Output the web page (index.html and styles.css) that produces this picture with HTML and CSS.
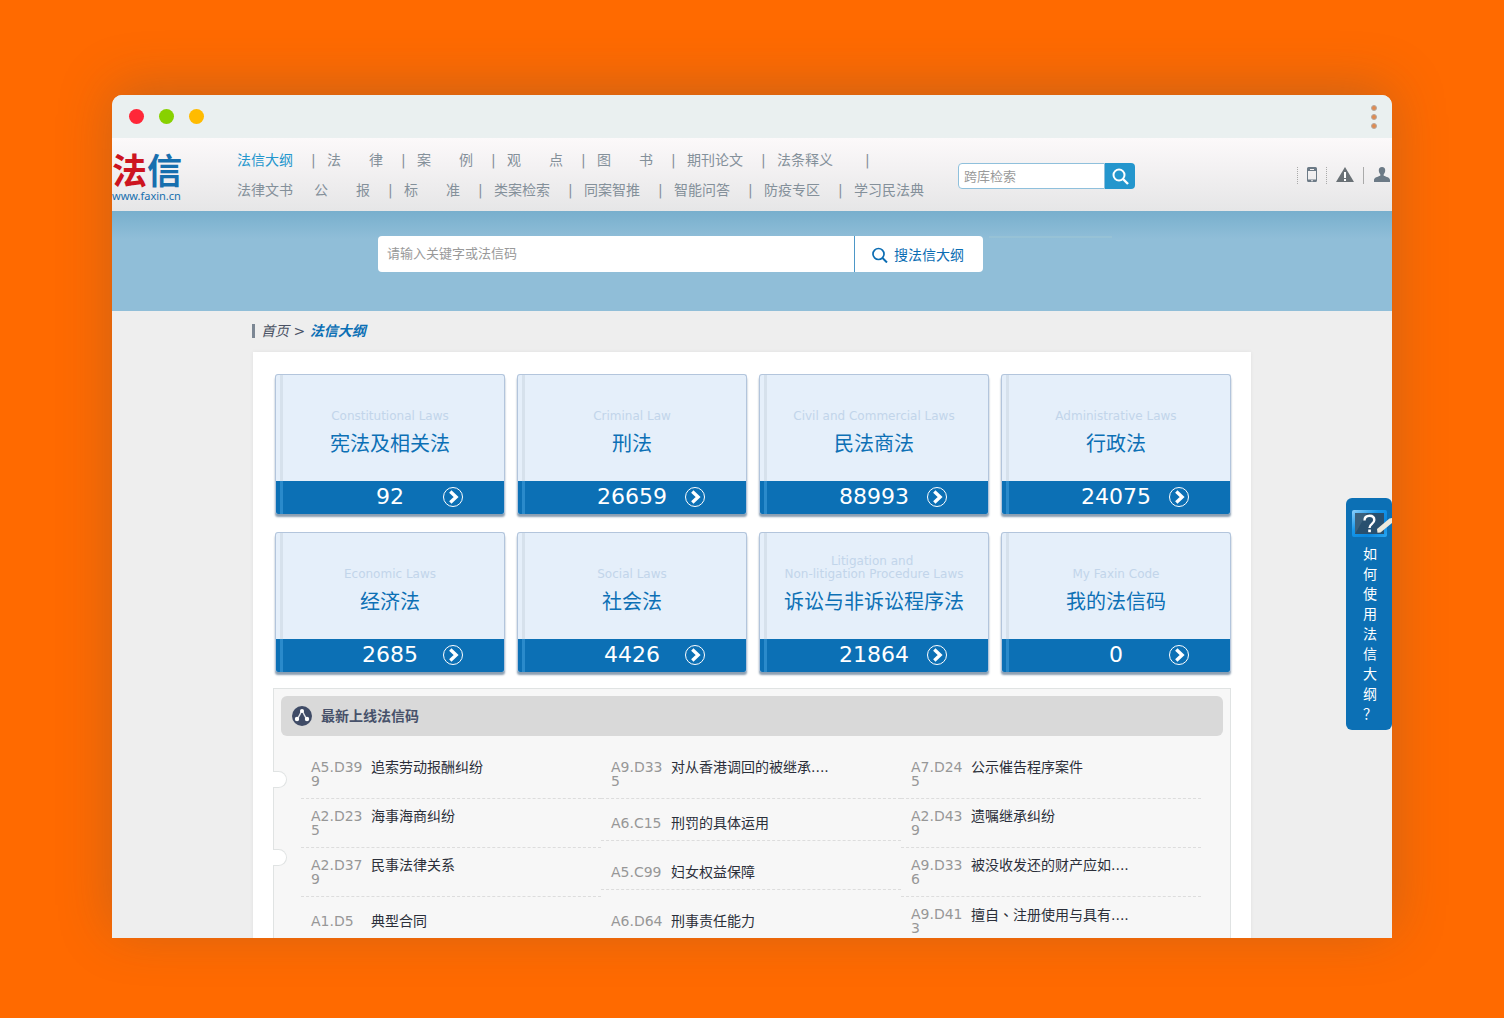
FILE: index.html
```html
<!DOCTYPE html>
<html lang="zh-CN">
<head>
<meta charset="utf-8">
<title>法信大纲</title>
<link rel="stylesheet" href="styles.css">
</head>
<body>
<div class="window">
  <div class="titlebar">
    <div class="lights"><i class="light red"></i><i class="light green"></i><i class="light amber"></i></div>
    <div class="more"><i></i><i></i><i></i></div>
  </div>

  <header class="header">
    <a class="logo" href="#"><span class="logo-name"><span class="logo-fa">法</span>信</span><span class="logo-url">www.faxin.cn</span></a>
    <nav class="nav">
      <ul class="nav-row">
        <li><a class="active" href="#">法信大纲</a><span>|</span></li>
        <li><a href="#">法　　律</a><span>|</span></li>
        <li><a href="#">案　　例</a><span>|</span></li>
        <li><a href="#">观　　点</a><span>|</span></li>
        <li><a href="#">图　　书</a><span>|</span></li>
        <li><a href="#">期刊论文</a><span>|</span></li>
        <li class="wide"><a href="#">法条释义</a><span>|</span></li>
      </ul>
      <ul class="nav-row">
        <li class="plain"><a href="#">法律文书</a></li>
        <li><a href="#">公　　报</a><span>|</span></li>
        <li><a href="#">标　　准</a><span>|</span></li>
        <li><a href="#">类案检索</a><span>|</span></li>
        <li><a href="#">同案智推</a><span>|</span></li>
        <li><a href="#">智能问答</a><span>|</span></li>
        <li><a href="#">防疫专区</a><span>|</span></li>
        <li><a href="#">学习民法典</a></li>
      </ul>
    </nav>
    <form class="mini-search">
      <input type="text" placeholder="跨库检索" aria-label="跨库检索">
      <button type="button" aria-label="检索"><svg width="18" height="18" viewBox="0 0 18 18" fill="none" stroke="#fff" stroke-width="2"><circle cx="8" cy="8" r="5.500"/><path d="M12 12l5 5" stroke-width="2.400"/></svg></button>
    </form>
    <div class="tools">
      <a class="tool phone" href="#" aria-label="手机"><svg width="10" height="16" viewBox="0 0 10 16"><path fill="#6c7a86" fill-rule="evenodd" d="M1.500 0h7A1.500 1.500 0 0 1 10 1.500v12A1.500 1.500 0 0 1 8.500 15h-7A1.500 1.500 0 0 1 0 13.500v-12A1.500 1.500 0 0 1 1.500 0zM1 4v8.500h8V4zM3 2v1h4V2zM4 13.300v.9h2v-.9z"/></svg></a>
      <a class="tool warn" href="#" aria-label="提示"><svg width="18" height="15" viewBox="0 0 18 15"><path fill="#6a7176" d="M9 0l9 15H0z"/><path fill="#fff" d="M8 5h2v6H8zM8 12h2v2H8z"/></svg></a>
      <a class="tool user" href="#" aria-label="用户"><svg width="16" height="15" viewBox="0 0 16 15"><path fill="#6c7a86" d="M8 0c2.200 0 3.300 1.500 3.200 3.500-.1 1.700-.7 3-1.500 3.800v1.400c2.500 1 6.300 1.800 6.300 4.300v2H0v-2c0-2.500 3.800-3.300 6.300-4.300V7.300C5.500 6.500 4.900 5.200 4.800 3.500 4.700 1.500 5.800 0 8 0z"/></svg></a>
    </div>
  </header>

  <section class="banner">
    <form class="search">
      <input type="text" placeholder="请输入关键字或法信码" aria-label="关键字">
      <button type="button"><svg width="17" height="17" viewBox="0 0 17 17" fill="none" stroke="#0c6db3" stroke-width="1.700"><circle cx="7.500" cy="8" r="5.500"/><path d="M11.500 12l4.500 4.500" stroke-width="2"/></svg>搜法信大纲</button>
    </form>
    <div class="rule"></div>
  </section>

  <main class="main">
    <p class="crumbs"><a href="#">首页</a> &gt; <a class="current" href="#">法信大纲</a></p>
    <div class="panel">
      <div class="cards">
        <a class="card" href="#"><span class="card-body"><span class="en">Constitutional Laws</span><span class="cn">宪法及相关法</span></span><span class="card-foot"><b>92</b><svg class="go" viewBox="0 0 20 20"><use href="#arrow"/></svg></span></a>
        <a class="card" href="#"><span class="card-body"><span class="en">Criminal Law</span><span class="cn">刑法</span></span><span class="card-foot"><b>26659</b><svg class="go" viewBox="0 0 20 20"><use href="#arrow"/></svg></span></a>
        <a class="card" href="#"><span class="card-body"><span class="en">Civil and Commercial Laws</span><span class="cn">民法商法</span></span><span class="card-foot"><b>88993</b><svg class="go" viewBox="0 0 20 20"><use href="#arrow"/></svg></span></a>
        <a class="card" href="#"><span class="card-body"><span class="en">Administrative Laws</span><span class="cn">行政法</span></span><span class="card-foot"><b>24075</b><svg class="go" viewBox="0 0 20 20"><use href="#arrow"/></svg></span></a>
        <a class="card" href="#"><span class="card-body"><span class="en">Economic Laws</span><span class="cn">经济法</span></span><span class="card-foot"><b>2685</b><svg class="go" viewBox="0 0 20 20"><use href="#arrow"/></svg></span></a>
        <a class="card" href="#"><span class="card-body"><span class="en">Social Laws</span><span class="cn">社会法</span></span><span class="card-foot"><b>4426</b><svg class="go" viewBox="0 0 20 20"><use href="#arrow"/></svg></span></a>
        <a class="card" href="#"><span class="card-body"><span class="en">Litigation and&nbsp;<br>Non-litigation Procedure Laws</span><span class="cn">诉讼与非诉讼程序法</span></span><span class="card-foot"><b>21864</b><svg class="go" viewBox="0 0 20 20"><use href="#arrow"/></svg></span></a>
        <a class="card" href="#"><span class="card-body"><span class="en">My Faxin Code</span><span class="cn">我的法信码</span></span><span class="card-foot"><b>0</b><svg class="go" viewBox="0 0 20 20"><use href="#arrow"/></svg></span></a>
      </div>

      <section class="latest">
        <h2><svg width="20" height="20" viewBox="0 0 20 20"><circle cx="10" cy="10" r="10" fill="#3f4b66"/><path d="M5 13.500C6.500 11 8 9 9.500 5h1c1.500 4 3 6 4.500 8.500" fill="none" stroke="#e4e6ea" stroke-width="1.400"/><circle cx="10" cy="5" r="2" fill="#fff"/><circle cx="5" cy="13" r="2.200" fill="#fff"/><circle cx="15" cy="13" r="2.200" fill="#fff"/></svg>最新上线法信码</h2>
        <ul class="codes">
          <li><span>A5.D399</span><a href="#">追索劳动报酬纠纷</a></li>
          <li><span>A9.D335</span><a href="#">对从香港调回的被继承....</a></li>
          <li><span>A7.D245</span><a href="#">公示催告程序案件</a></li>
          <li><span>A2.D235</span><a href="#">海事海商纠纷</a></li>
          <li><span>A6.C15</span><a href="#">刑罚的具体运用</a></li>
          <li><span>A2.D439</span><a href="#">遗嘱继承纠纷</a></li>
          <li><span>A2.D379</span><a href="#">民事法律关系</a></li>
          <li><span>A5.C99</span><a href="#">妇女权益保障</a></li>
          <li><span>A9.D336</span><a href="#">被没收发还的财产应如....</a></li>
          <li><span>A1.D5</span><a href="#">典型合同</a></li>
          <li><span>A6.D64</span><a href="#">刑事责任能力</a></li>
          <li><span>A9.D413</span><a href="#">擅自<span class="tc" lang="zh-TW">、</span>注册使用与具有....</a></li>
        </ul>
      </section>
    </div>
  </main>

  <a class="help" href="#">
    <svg width="40" height="28" viewBox="0 0 40 28">
      <defs><linearGradient id="frame" x1="0" y1="0" x2="1" y2="1"><stop offset="0" stop-color="#8fd0fb"/><stop offset=".4" stop-color="#1596ea"/><stop offset=".7" stop-color="#0a86dc"/><stop offset="1" stop-color="#2aa9f5"/></linearGradient></defs>
      <rect x="0" y="1" width="35" height="27" rx="2" fill="url(#frame)"/>
      <rect x="3" y="4" width="29" height="21" fill="#28506f"/>
      <path d="M3 25V4h12z" fill="#3a607d"/>
      <path d="M12.500 11.500c0-3 2-4.800 5-4.800s4.800 1.800 4.800 4.300c0 4-4.800 3.800-4.800 8" fill="none" stroke="#fff" stroke-width="2.400"/>
      <path d="M16.200 20.500h2.700v2.700h-2.700z" fill="#fff"/>
      <path d="M25 20L37.500 9.500 40 9v5L28.500 23.500l-3 .3z" fill="#ece9dc"/>
    </svg>
    <span>如何使用法信大纲？</span>
  </a>
</div>
<svg class="symbols" aria-hidden="true"><symbol id="arrow" viewBox="0 0 20 20"><circle cx="10" cy="10" r="9.500" fill="none" stroke="#fff"/><path d="M7.300 4.600l5.800 5.400-5.800 5.400" fill="none" stroke="#fff" stroke-width="3.400"/></symbol></svg>
</body>
</html>
```
FILE: styles.css
```css
*, *::before, *::after { box-sizing: border-box; }
body {
  margin: 0;
  height: 100vh;
  display: flex;
  padding: 95px 112px 80px;
  background: #ff6a00;
  font-family: "DejaVu Sans", "Noto Sans CJK SC", sans-serif;
  font-size: 14px;
  color: #333;
}
a { color: inherit; text-decoration: none; }
ul { list-style: none; margin: 0; padding: 0; }
input, button { font: inherit; border: 0; margin: 0; padding: 0; background: none; }
input::placeholder { color: #999; opacity: 1; }
svg { display: block; flex: none; }
.symbols { position: absolute; width: 0; height: 0; }

.window {
  position: relative;
  flex: 1;
  min-width: 0;
  overflow: hidden;
  background: #eee;
  border-radius: 10px 10px 0 0;
  box-shadow: 0 -8px 54px rgba(60, 80, 90, .27);
}
.titlebar {
  display: flex;
  justify-content: space-between;
  align-items: center;
  height: 43px;
  padding: 0 15px 0 17px;
  background: #eaf0f0;
}
.lights { display: flex; gap: 15px; }
.light { width: 15px; height: 15px; border-radius: 50%; }
.red { background: #ff2738; }
.green { background: #88d100; }
.amber { background: #fb0; }
.more { display: grid; gap: 3px; }
.more i { width: 6px; height: 6px; border-radius: 50%; background: #e08a50; border: 1px solid #b5aaa2; }

.header {
  display: flex;
  height: 73px;
  background: linear-gradient(#fcf9fa, #e6e6e7);
  color: #84909a;
}
.logo { display: flex; flex-direction: column; width: 125px; padding-top: 15px; color: #176fae; }
.logo-name { font: 700 35px/38px "Liberation Sans", "Noto Sans CJK SC", sans-serif; }
.logo-fa { color: #cd1420; }
.logo-url { font: 11px/10px "Noto Sans", sans-serif; }
.nav { width: 721px; padding-top: 7px; }
.nav-row { display: flex; line-height: 30px; white-space: nowrap; }
.nav-row li { display: flex; gap: 18px; flex: 0 0 90px; }
.nav-row .wide { gap: 32px; }
.nav-row .plain { flex-basis: 77px; }
.active { color: #2496cd; }
.mini-search { display: flex; height: 26px; margin-top: 25px; }
.mini-search input {
  width: 147px;
  padding: 0 5px;
  background: #fff;
  border: 1px solid #8fc0dc;
  border-radius: 4px 0 0 4px;
  font-size: 13px;
}
.mini-search button {
  display: grid;
  place-items: center;
  width: 30px;
  background: #2496cd;
  border-radius: 0 4px 4px 0;
}
.tools { display: flex; height: 17px; margin: 29px 2px 0 auto; }
.tool { padding: 0 9px; border-left: 1px dotted #aaa; }
.tool.user { padding: 0 0 0 10px; border-left-style: solid; }

.banner {
  display: flex;
  gap: 6px;
  height: 100px;
  padding: 25px 0 0 266px;
  background: linear-gradient(#78afcd, #90bed8 28px);
}
.search { display: flex; width: 605px; height: 36px; background: #fff; border-radius: 4px; }
.search input { flex: 1; padding: 0 9px 2px; font-size: 13px; }
.search button {
  display: flex;
  align-items: center;
  justify-content: center;
  gap: 6px;
  width: 129px;
  padding-right: 3px;
  border-left: 1px solid #4d97c7;
  color: #0c6db3;
}
.rule { width: 123px; height: 2px; background: #97c2d6; }

.main { width: 998px; margin: 0 auto; }
.crumbs {
  height: 41px;
  margin: 0 0 0 -1px;
  padding: 10px 0 0 9px;
  line-height: 20px;
  font-style: italic;
  color: #4a5264;
  background: linear-gradient(#7c8794, #7c8794) 0 13px / 3px 14px no-repeat;
}
.current { font-weight: bold; color: #0c70b5; }
.panel { background: #fff; padding: 22px 20px 40px; box-shadow: 0 0 4px rgba(0, 0, 0, .06); }
.cards { display: grid; grid-template-columns: repeat(4, 1fr); gap: 18px 12px; padding-left: 2px; }
.card {
  display: block;
  position: relative;
  border: 1px solid #b3c5dc;
  border-bottom: 0;
  border-radius: 3px;
  background: #e5effa;
  box-shadow: 0 3px 2px #8c9fb2;
  color: #0c70b5;
  text-align: center;
}
.card::after {
  content: "";
  position: absolute;
  top: 0;
  bottom: 0;
  left: 4px;
  width: 3px;
  background: linear-gradient(#d6e1ec 106px, #2a8acb 106px);
}
.card-body { display: flex; flex-direction: column; justify-content: flex-end; height: 106px; padding-bottom: 23px; }
.en { font-size: 12px; line-height: 13px; color: #c2d5ea; }
.cn { margin-top: 7px; font-size: 20px; line-height: 28px; }
.card-foot {
  display: grid;
  grid-template-columns: 1fr 80px 1fr;
  align-items: center;
  height: 33px;
  padding-bottom: 1px;
  background: #0c70b5;
  border-radius: 0 0 2px 2px;
  color: #fff;
}
.card-foot b { grid-column: 2; font-size: 22px; font-weight: normal; line-height: 32px; }
.go { width: 20px; height: 20px; margin-left: 13px; }

.latest { position: relative; margin-top: 16px; padding: 7px 7px 20px; background: #f7f7f7; border: 1px solid #e0e3e3; }
.latest::before, .latest::after {
  content: "";
  position: absolute;
  left: -1px;
  width: 14px;
  height: 17px;
  background: #fff;
  border: 1px solid #e0e3e3;
  border-left: 0;
  border-radius: 0 9px 9px 0;
}
.latest::before { top: 82px; }
.latest::after { top: 160px; }
.latest h2 {
  display: flex;
  align-items: center;
  gap: 9px;
  height: 40px;
  margin: 0 0 14px;
  padding-left: 11px;
  background: #d9d9d9;
  border-radius: 6px;
  font-size: 14px;
  line-height: 20px;
  color: #47516a;
}
.codes {
  display: grid;
  grid-template-columns: repeat(3, 1fr);
  grid-auto-rows: 49px;
  align-items: center;
  margin: 0 22px 0 20px;
  line-height: 14px;
}
.codes li { display: flex; gap: 4px; padding: 10px; border-bottom: 1px dashed #ddd; color: #2b2f3a; }
.codes li > span { width: 56px; word-break: break-all; color: #979797; }
.tc { font-family: "Noto Sans CJK TC", sans-serif; }

.help {
  position: absolute;
  top: 403px;
  right: 0;
  width: 46px;
  padding: 11px 0 6px 6px;
  background: #0c70b5;
  border-radius: 6px;
  color: #fff;
  line-height: 20px;
}
.help span { display: block; width: 14px; margin: 7px 0 0 11px; word-break: break-all; line-break: anywhere; }
```
